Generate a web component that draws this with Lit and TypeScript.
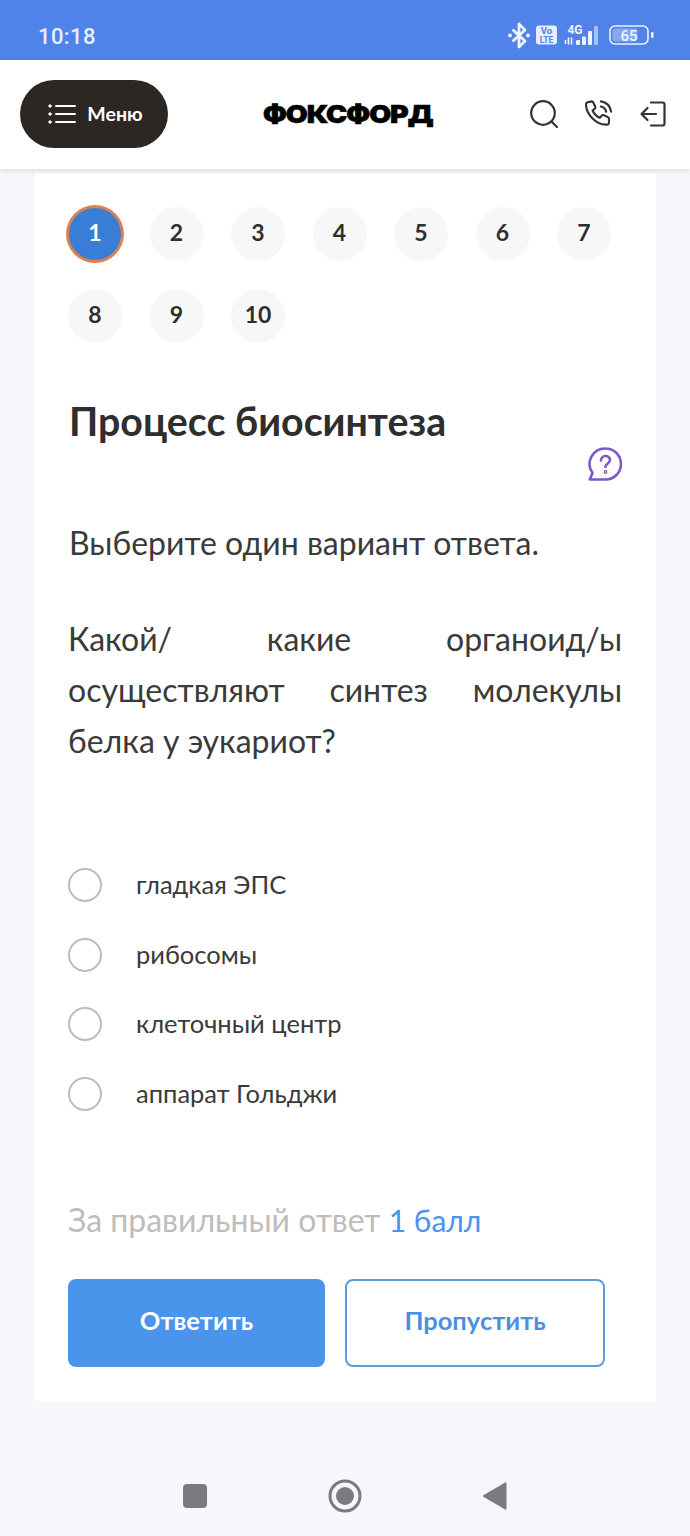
import { LitElement, html, css } from 'lit';
import { customElement } from 'lit/decorators.js';

const FONT = css`Lato, "Noto Sans", sans-serif`;

@customElement('app-root')
export class AppRoot extends LitElement {
  static styles = css`
    :host {
      display: block;
      width: 690px;
      height: 1536px;
      overflow: hidden;
      background: #f5f7fc;
      font-family: ${FONT};
      color: #3a3a3a;
    }
    .status {
      height: 60px;
      background: #5083ea;
      display: flex;
      align-items: center;
      justify-content: space-between;
      padding: 0 36px 0 38px;
      box-sizing: border-box;
      color: #e6f0ff;
    }
    .time {
      font-family: Roboto, sans-serif;
      font-size: 22px;
      font-weight: 500;
      letter-spacing: 0.4px;
      padding-top: 12px;
    }
    .status-icons {
      display: flex;
      align-items: center;
      padding-top: 11px;
    }
    .status-icons svg text {
      font-family: Roboto, sans-serif;
    }
    .header {
      height: 109px;
      background: #fff;
      display: flex;
      align-items: center;
      padding: 0 24px 2px 20px;
      box-shadow: 0 2px 5px rgba(0, 0, 0, 0.1);
      position: relative;
      box-sizing: border-box;
    }
    .menu {
      width: 148px;
      height: 68px;
      border-radius: 34px;
      background: #2d2723;
      color: #fff;
      display: flex;
      align-items: center;
      justify-content: center;
      gap: 11px;
      font-size: 19.5px;
      font-weight: 700;
      box-sizing: border-box;
      padding-left: 3px;
    }
    .menu span {
      padding-bottom: 1px;
    }
    .logo {
      margin-left: 95px;
      width: 170px;
      font-family: Inter, sans-serif;
      font-weight: 900;
      font-size: 25px;
      color: #000;
      -webkit-text-stroke: 0.6px #000;
      letter-spacing: -0.9px;
      white-space: nowrap;
      transform: scaleX(1.135);
      transform-origin: left center;
    }
    .header-icons {
      margin-left: auto;
      display: flex;
      align-items: center;
      gap: 27px;
    }
    .card {
      width: 622px;
      height: 1228px;
      margin: 4px 0 0 34px;
      background: #fff;
      box-sizing: border-box;
      padding: 34px 34px 0;
    }
    .steps {
      display: grid;
      grid-template-columns: repeat(7, 54px);
      column-gap: 27.5px;
      row-gap: 28px;
    }
    .step {
      width: 54px;
      height: 54px;
      border-radius: 50%;
      background: #f7f7f7;
      display: flex;
      align-items: center;
      justify-content: center;
      font-size: 23px;
      font-weight: 700;
      color: #2f2f2f;
      padding-bottom: 5px;
      box-sizing: border-box;
    }
    .step.active {
      background: #3a7dd6;
      color: #fff;
      box-shadow: 0 0 0 2px #e0804f;
      border: 1px solid #e0804f;
    }
    h1 {
      margin: 53px 0 0 1px;
      font-size: 39.3px;
      line-height: 50px;
      font-weight: 700;
      color: #2e2e2e;
      white-space: nowrap;
    }
    .hint {
      display: flex;
      justify-content: flex-end;
      height: 34px;
      margin-top: 1px;
    }
    .intro {
      margin: 37px 0 0 1px;
      font-size: 32px;
      line-height: 50px;
    }
    .question {
      margin: 45px 0 0;
      font-size: 32px;
      line-height: 51px;
      text-align: justify;
      width: 554px;
    }
    .options {
      margin-top: 102px;
      display: flex;
      flex-direction: column;
      gap: 35.5px;
    }
    .option {
      display: flex;
      align-items: center;
      gap: 34px;
      height: 34px;
      font-size: 25.5px;
    }
    .option-text {
      padding-bottom: 2px;
    }
    .radio {
      width: 34px;
      height: 34px;
      border-radius: 50%;
      border: 2px solid #bdbdbd;
      box-sizing: border-box;
      flex: none;
    }
    .score {
      margin-top: 88px;
      font-size: 32px;
      line-height: 42px;
      color: #bdbdbd;
      white-space: nowrap;
    }
    .score span {
      color: #4a94ec;
      font-size: 30px;
    }
    .buttons {
      margin-top: 38px;
      display: flex;
      gap: 20px;
    }
    .btn {
      height: 88px;
      border-radius: 8px;
      display: flex;
      align-items: center;
      justify-content: center;
      font-size: 25.5px;
      font-weight: 700;
      box-sizing: border-box;
      padding-bottom: 5px;
    }
    .btn.primary {
      width: 257px;
      background: #4a94ec;
      color: #fff;
    }
    .btn.secondary {
      width: 260px;
      background: #fff;
      color: #4a90e2;
      border: 2px solid #5c9bdc;
    }
    .nav {
      margin-top: 78px;
      display: flex;
      justify-content: center;
      align-items: center;
      gap: 107px;
    }
  `;

  renderStatusIcons() {
    return html`<div class="status-icons">
      <svg width="146" height="28" viewBox="0 0 146 28" fill="none">
        <path d="M4.500 7.500 L17 19 L11 25 V2 L17 8 L4.500 19.500" stroke="#eef4ff" stroke-width="2.800" stroke-linejoin="round" />
        <circle cx="2" cy="13.500" r="2" fill="#eef4ff" />
        <circle cx="20" cy="13.500" r="2" fill="#eef4ff" />
        <rect x="28" y="3.500" width="21" height="19" rx="3" fill="#e6eeff" />
        <text x="38.500" y="12" font-size="9.500" font-weight="700" fill="#5083ea" text-anchor="middle">Vo</text>
        <text x="38.500" y="21" font-size="8.500" font-weight="700" fill="#5083ea" text-anchor="middle">LTE</text>
        <text x="67" y="11.500" font-size="12" font-weight="700" fill="#eef4ff" text-anchor="middle">4G</text>
        <path d="M57.500 18v4M60.500 15.500v7M63.500 15.500v7" stroke="#eef4ff" stroke-width="1.600" />
        <rect x="68" y="18" width="4" height="5" rx="1" fill="#eef4ff" />
        <rect x="74" y="14.500" width="4" height="8.500" rx="1" fill="#eef4ff" />
        <rect x="80" y="9" width="4" height="14" rx="1" fill="#eef4ff" />
        <rect x="86" y="4" width="4" height="19" rx="1" fill="#a6c2f5" />
        <rect x="102" y="4" width="38" height="18" rx="5" stroke="#eef4ff" stroke-width="1.600" />
        <rect x="104.500" y="6.500" width="25" height="13" rx="3" fill="#86a9ef" />
        <text x="121" y="19" font-size="15" font-weight="500" fill="#eef4ff" text-anchor="middle">65</text>
        <rect x="143" y="10" width="2.500" height="6" rx="1" fill="#eef4ff" />
      </svg>
    </div>`;
  }

  renderHeaderIcons() {
    return html`<div class="header-icons">
      <svg width="28" height="28" viewBox="0 0 28 28" fill="none" stroke="#333" stroke-width="2.200" stroke-linecap="round">
        <circle cx="13" cy="13" r="11.800" />
        <path d="M22 22l5 5" />
      </svg>
      <svg width="28" height="28" viewBox="0 0 30 30" fill="none" stroke="#333" stroke-width="2.300" stroke-linecap="round" stroke-linejoin="round">
        <path d="M3 2.500 l4-1 c1 0 1.600.5 2 1.400 l2 4.400 c.3.8.1 1.500-.5 2 l-2.400 2 c1.600 3.600 4.200 6.200 7.800 7.800 l2-2.400 c.5-.6 1.200-.8 2-.5 l4.400 2 c1 .4 1.400 1 1.400 2 v4 c0 1.400-1 2.400-2.400 2.200 C12 26.800 1.500 15.500 1 4.800 c0-1 .8-2 2-2.300z" />
        <path d="M17 1.500c6 1 10 5 11 11M17 7c3 .6 5 2.600 5.600 5.600" />
      </svg>
      <svg width="26" height="26" viewBox="0 0 26 26" fill="none" stroke="#333" stroke-width="2.200" stroke-linecap="round" stroke-linejoin="round">
        <path d="M11 1.500h11.500a2 2 0 0 1 2 2v19a2 2 0 0 1-2 2H11" />
        <path d="M16 13H1.500M7.500 7l-6 6 6 6" />
      </svg>
    </div>`;
  }

  render() {
    const steps = [1, 2, 3, 4, 5, 6, 7, 8, 9, 10];
    const options = ['гладкая ЭПС', 'рибосомы', 'клеточный центр', 'аппарат Гольджи'];
    return html`
      <div class="status">
        <div class="time">10:18</div>
        ${this.renderStatusIcons()}
      </div>
      <header class="header">
        <div class="menu">
          <svg width="28" height="20" viewBox="0 0 28 20" fill="none" stroke="#fff" stroke-width="2" stroke-linecap="round">
            <path d="M8 2h19M8 10h19M8 18h19" />
            <circle cx="2" cy="2" r="1.200" fill="#fff" stroke-width="1" />
            <circle cx="2" cy="10" r="1.200" fill="#fff" stroke-width="1" />
            <circle cx="2" cy="18" r="1.200" fill="#fff" stroke-width="1" />
          </svg>
          <span>Меню</span>
        </div>
        <div class="logo">ФОКСФОРД</div>
        ${this.renderHeaderIcons()}
      </header>
      <main class="card">
        <div class="steps">
          ${steps.map((n) => html`<div class="step ${n === 1 ? 'active' : ''}">${n}</div>`)}
        </div>
        <h1>Процесс биосинтеза</h1>
        <div class="hint">
          <svg width="34" height="34" viewBox="0 0 34 34" fill="none" stroke="#7e57c8" stroke-width="2.600" stroke-linejoin="round" stroke-linecap="round">
            <path d="M17.500 1.500a15.500 15.500 0 1 1 0 31H1.800l2.700-6.500A15.500 15.500 0 0 1 17.500 1.500z" />
            <path d="M13 13.500c0-6 9-6 9-.5 0 3.500-4.500 3.500-4.500 7" />
            <circle cx="17.500" cy="25" r="0.600" />
          </svg>
        </div>
        <p class="intro">Выберите один вариант ответа.</p>
        <p class="question">Какой/ какие органоид/ы осуществляют синтез молекулы белка у эукариот?</p>
        <div class="options">
          ${options.map((o) => html`<label class="option"><span class="radio"></span><span class="option-text">${o}</span></label>`)}
        </div>
        <div class="score">За правильный ответ <span>1 балл</span></div>
        <div class="buttons">
          <div class="btn primary">Ответить</div>
          <div class="btn secondary">Пропустить</div>
        </div>
      </main>
      <nav class="nav">
        <svg width="52" height="34" viewBox="0 0 52 34"><rect x="14" y="5" width="24" height="24" rx="4" fill="#797b80" /></svg>
        <svg width="34" height="34" viewBox="0 0 34 34"><circle cx="17" cy="17" r="15" fill="none" stroke="#797b80" stroke-width="3" /><circle cx="17" cy="17" r="9" fill="#797b80" /></svg>
        <svg width="52" height="34" viewBox="0 0 52 34"><path d="M37 3.500v27L14 17z" fill="#797b80" stroke="#797b80" stroke-width="1" stroke-linejoin="round" /></svg>
      </nav>
    `;
  }
}
